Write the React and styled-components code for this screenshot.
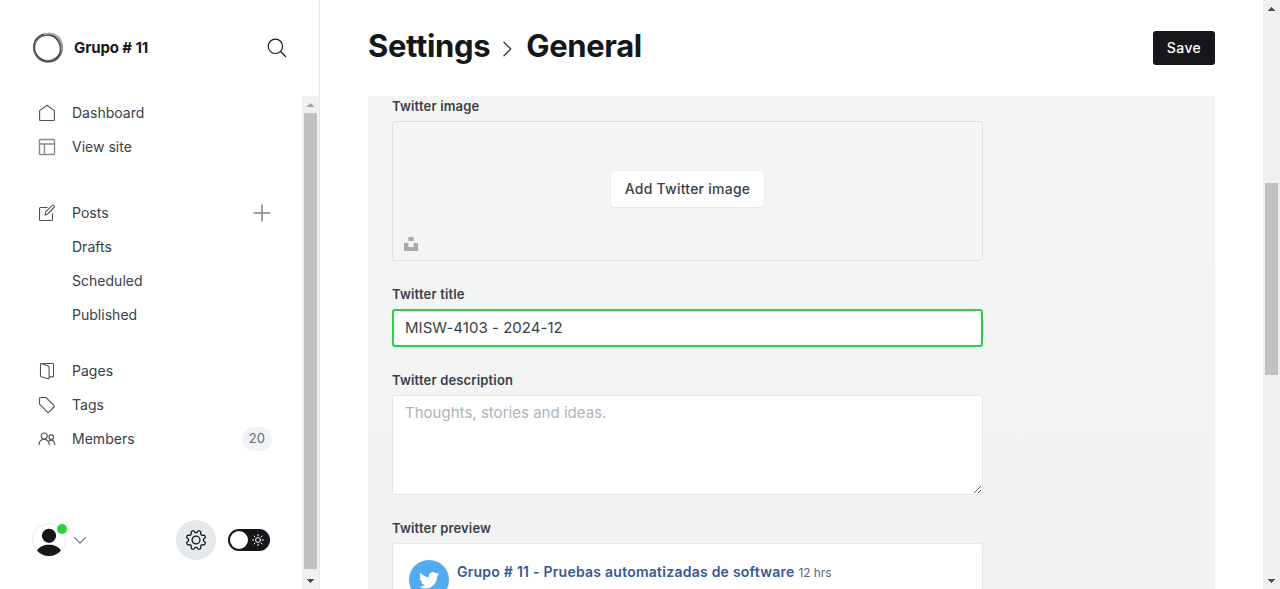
import React from "react";
import styled, { createGlobalStyle } from "styled-components";

const Global = createGlobalStyle`
  * { box-sizing: border-box; }
  html, body { margin: 0; height: 589px; overflow: hidden; background: #fff; }
  body, button, input, textarea { font-family: Inter, "Liberation Sans", sans-serif; }
  svg { display: block; flex: none; }
`;

const Page = styled.div`
  display: flex;
  width: 1280px;
  height: 589px;
  background: #fff;
  color: #394047;
`;

const Sidebar = styled.aside`
  display: flex;
  flex-direction: column;
  width: 320px;
  border-right: 1px solid #e6e9eb;
`;

const SiteHeader = styled.header`
  display: flex;
  align-items: center;
  height: 96px;
  padding: 0 32px;
`;

const SiteName = styled.div`
  flex: 1;
  margin-left: 10px;
  padding-bottom: 1px;
  font-size: 15px;
  font-weight: 700;
  letter-spacing: -0.1px;
  color: #15171a;
  white-space: nowrap;
`;

const SidebarBody = styled.div`
  display: flex;
  flex: 1;
  min-height: 0;
`;

const SidebarContent = styled.div`
  display: flex;
  flex-direction: column;
  flex: 1;
`;

const Nav = styled.nav`
  display: flex;
  flex-direction: column;
  flex: 1;
`;

const NavGroup = styled.div`
  margin-bottom: ${(p) => p.$gap}px;
`;

const NavRow = styled.a`
  display: flex;
  align-items: center;
  height: 34px;
  padding: 0 30px 0 ${(p) => (p.$nested ? 72 : 38)}px;
  font-size: 14px;
  white-space: nowrap;
`;

const NavIcon = styled.span`
  width: 34px;
`;

const NavLabel = styled.span`
  flex: 1;
  padding-bottom: 2px;
  letter-spacing: 0.02px;
`;

const Count = styled.span`
  width: 30px;
  height: 24px;
  border-radius: 12px;
  background: #f1f3f4;
  color: #626d79;
  font-size: 13px;
  line-height: 23px;
  letter-spacing: 0.3px;
  text-align: center;
`;

const PlusSlot = styled.span`
  margin-right: 1px;
`;

const Footer = styled.footer`
  display: flex;
  align-items: center;
  height: 40px;
  margin-bottom: 29px;
  padding: 0 32px;
`;

const FooterSpace = styled.div`
  flex: 1;
`;

const Avatar = styled.div`
  position: relative;
  width: 34px;
  height: 34px;
  margin-right: 8px;
`;

const OnlineDot = styled.span`
  position: absolute;
  top: 1px;
  right: -1px;
  width: 10px;
  height: 10px;
  border-radius: 50%;
  background: #30cf43;
`;

const SettingsButton = styled.span`
  display: flex;
  align-items: center;
  justify-content: center;
  width: 40px;
  height: 40px;
  margin-right: 12px;
  border-radius: 50%;
  background: #e5e9eb;
`;

const ThemeSwitch = styled.span`
  display: flex;
  align-items: center;
  justify-content: space-between;
  width: 42px;
  height: 22px;
  padding: 0 6px 0 2px;
  border-radius: 11px;
  background: #15171a;
`;

const Knob = styled.span`
  width: 18px;
  height: 18px;
  border-radius: 50%;
  background: #fff;
`;

const Track = styled.div`
  display: flex;
  flex-direction: column;
  align-items: center;
  width: 17px;
  height: 100%;
  background: #f0f0f0;
`;

const TrackEnd = styled.div`
  display: flex;
  align-items: center;
  justify-content: center;
  height: 17px;
`;

const Thumb = styled.div`
  width: 13px;
  height: ${(p) => p.$size}px;
  margin-top: ${(p) => p.$start}px;
  margin-bottom: auto;
  background: #c1c1c1;
`;

const Main = styled.main`
  display: flex;
  flex-direction: column;
  flex: 1;
  padding: 0 48px;
`;

const PageHeader = styled.header`
  display: flex;
  align-items: center;
  justify-content: space-between;
  height: 96px;
`;

const Title = styled.h1`
  display: flex;
  align-items: center;
  margin: 0;
  padding-bottom: 5px;
  font-size: 31px;
  font-weight: 700;
  line-height: 40px;
  color: #15171a;
`;

const Crumb = styled.span`
  letter-spacing: -0.35px;
`;

const CrumbArrow = styled.span`
  margin: 7px 14px 0 13px;
`;

const SaveButton = styled.button`
  width: 62px;
  height: 34px;
  padding: 0 0 2px;
  border: 0;
  border-radius: 3px;
  background: #15171a;
  color: #fff;
  font-size: 14px;
  font-weight: 500;
  letter-spacing: 0.45px;
`;

const Panel = styled.section`
  flex: 1;
  min-height: 0;
  overflow: hidden;
  padding: 1px 24px 0;
  background: linear-gradient(#f4f6f5, #f1f3f2);
`;

const Field = styled.div`
  width: 591px;
  margin-bottom: 24px;
`;

const Label = styled.label`
  display: block;
  height: 18px;
  margin-bottom: 6px;
  font-size: 13px;
  font-weight: 600;
  line-height: 18px;
  letter-spacing: 0.16px;
`;

const ImageDrop = styled.div`
  position: relative;
  display: flex;
  align-items: center;
  justify-content: center;
  height: 140px;
  padding-bottom: 4px;
  border: 1px solid #dce0e0;
  border-radius: 3px;
`;

const AddImage = styled.button`
  width: 153px;
  height: 36px;
  padding: 0 0 2px;
  border: 0;
  border-radius: 3px;
  background: #fff;
  box-shadow: 0 0 1px rgba(0, 0, 0, 0.15), 0 1px 2px rgba(0, 0, 0, 0.05);
  color: #394047;
  font-size: 14px;
  font-weight: 500;
  letter-spacing: 0.24px;
  white-space: nowrap;
`;

const UnsplashBadge = styled.span`
  position: absolute;
  left: 11px;
  bottom: 9px;
`;

const TextInput = styled.input`
  display: block;
  width: 100%;
  height: 38px;
  padding: 0 11px 2px;
  border: 2px solid #30cf43;
  border-radius: 3px;
  outline: none;
  background: #fff;
  color: #394047;
  font-size: 15px;
  letter-spacing: 0.04px;
`;

const TextArea = styled.textarea`
  display: block;
  width: 100%;
  height: 100px;
  padding: 6px 12px;
  border: 1px solid #e3e8e7;
  border-radius: 3px;
  outline: none;
  background: #fff;
  font-size: 15px;
  line-height: 21px;
  letter-spacing: 0.02px;
  resize: vertical;
  &::placeholder { color: #abb4be; }
`;

const PreviewCard = styled.div`
  display: flex;
  height: 220px;
  padding: 16px;
  border: 1px solid #e3e8e7;
  border-radius: 3px;
  background: #fff;
`;

const PreviewHead = styled.div`
  display: flex;
  align-items: baseline;
  height: 24px;
  margin-left: 8px;
  line-height: 24px;
  white-space: nowrap;
`;

const PreviewName = styled.span`
  font-size: 14px;
  font-weight: 600;
  letter-spacing: 0.245px;
  color: #365899;
`;

const PreviewTime = styled.span`
  margin-left: 4px;
  font-size: 12px;
  letter-spacing: -0.1px;
  color: #616770;
`;

const strokes = {
  fill: "none",
  stroke: "#4b535b",
  strokeWidth: 1.1,
  strokeLinecap: "round",
  strokeLinejoin: "round",
};

const icons = {
  home: <path d="M1.6 6.6 9 1.2l7.4 5.4v9.1a.8.8 0 0 1-.8.8H2.4a.8.8 0 0 1-.8-.8z" />,
  site: (
    <path
      stroke="#868b91"
      strokeWidth="1.4"
      d="M2.500 1.500h13a1 1 0 0 1 1 1v13a1 1 0 0 1-1 1h-13a1 1 0 0 1-1-1v-13a1 1 0 0 1 1-1zM1.500 6h15M6.500 6v10.500"
    />
  ),
  edit: <path d="M9 3.5H2.5a1 1 0 0 0-1 1v11a1 1 0 0 0 1 1h11a1 1 0 0 0 1-1V9.7M7 11l.7-3.1L14 1.6a1.3 1.3 0 0 1 1.9 0 1.3 1.3 0 0 1 0 1.9L9.7 9.9z" />,
  pages: <path d="M2.5 2.1v11.8a.9.9 0 0 0 .6.8l7 2a.8.8 0 0 0 1-.8V5a1.2 1.2 0 0 0-.8-1.1L3.300 1.600c-.5-.2-.8.1-.8.5zM3.2 1.5h11.6a.7.7 0 0 1 .7.7v12a.7.7 0 0 1-.7.7h-3.6" />,
  tag: <path d="M1.5 2.5v5a1.6 1.6 0 0 0 .5 1.2l7.5 7.4a1 1 0 0 0 1.4 0l5.1-5.1a1 1 0 0 0 0-1.4L8.5 2A1.7 1.7 0 0 0 7.3 1.5H2.5a1 1 0 0 0-1 1z" />,
  members: (
    <>
      <circle cx="6.2" cy="6" r="3" />
      <circle cx="13.3" cy="7.2" r="2.3" />
      <path d="M1.100 14.800c0-3.200 2-5.300 5-5.300s5.100 2.100 5.100 5.300M11.300 10.700c3-1.700 5.500.500 5.500 4.100" />
    </>
  ),
};

function LineIcon({ name }) {
  return (
    <svg width="18" height="18" viewBox="0 0 18 18" {...strokes}>
      {icons[name]}
    </svg>
  );
}

function Logo() {
  return (
    <svg width="32" height="32" viewBox="0 0 32 32" fill="none">
      <ellipse cx="16" cy="16" rx="13.900" ry="13.700" stroke="#777" strokeWidth="2.200" />
      <ellipse cx="16.600" cy="15.300" rx="14.300" ry="13.200" stroke="#888" strokeWidth="1.500" transform="rotate(-35 16 16)" />
      <ellipse cx="15.300" cy="16.500" rx="14.200" ry="12.600" stroke="#333" strokeWidth="1.100" transform="rotate(55 16 16)" />
      <path d="M12 2.800c7-3 15 .400 17.200 7.200v7" stroke="#aaa" strokeWidth="1.800" />
      <path d="M5 8C9 3 17 2 22.500 5.500S29 12 28.500 18" stroke="#555" strokeWidth="1" />
    </svg>
  );
}

function SearchIcon() {
  return (
    <svg width="20" height="20" viewBox="0 0 20 20" fill="none" stroke="#15171a" strokeWidth="1.2" strokeLinecap="round">
      <circle cx="8.4" cy="8.3" r="7.2" />
      <path d="m13.6 13.5 5 5" />
    </svg>
  );
}

function GearIcon() {
  const points = [];
  for (let i = 0; i < 96; i += 1) {
    const a = (i / 96) * Math.PI * 2;
    const wave = Math.max(-1, Math.min(1, Math.cos(a * 8 + Math.PI) * 1.5));
    const r = 8.6 + wave * 1.15;
    points.push(`${(11 + Math.cos(a) * r).toFixed(2)} ${(11 + Math.sin(a) * r).toFixed(2)}`);
  }
  return (
    <svg width="22" height="22" viewBox="0 0 22 22" fill="none" stroke="#15171a" strokeWidth="1.300" strokeLinejoin="round">
      <path d={`M${points.join("L")}Z`} />
      <circle cx="11" cy="11" r="3.900" />
    </svg>
  );
}

function SunIcon() {
  return (
    <svg width="12" height="12" viewBox="0 0 12 12" fill="none" stroke="#fff" strokeWidth="1" strokeLinecap="round">
      <circle cx="6" cy="6" r="2.400" />
      <path d="M6 .500v1.300M6 10.200v1.300M.500 6h1.300M10.200 6h1.300M2 2l1 1M9 9l1 1M2 10l1-1M9 3l1-1" />
    </svg>
  );
}

function UserIcon() {
  return (
    <svg width="34" height="34" viewBox="0 0 34 34">
      <circle cx="17" cy="17" r="16.4" fill="#fff" stroke="#e9ebed" />
      <circle cx="17" cy="12.8" r="7.1" fill="#15171a" />
      <path d="M5 27.5c2.3-3.7 7-5.7 12-5.7s9.7 2 12 5.7A16 16 0 0 1 17 33 16 16 0 0 1 5 27.5z" fill="#15171a" />
    </svg>
  );
}

function TwitterIcon() {
  return (
    <svg width="40" height="40" viewBox="0 0 40 40">
      <circle cx="20" cy="20" r="20" fill="#50abf1" />
      <path
        transform="translate(10 10.2) scale(.84)"
        fill="#fff"
        d="M23.95 4.57a10 10 0 0 1-2.82.78 4.96 4.96 0 0 0 2.16-2.73c-.95.56-2 .96-3.13 1.19a4.92 4.92 0 0 0-8.38 4.48C7.69 8.1 4.07 6.13 1.64 3.16a4.82 4.82 0 0 0-.67 2.48c0 1.71.87 3.21 2.19 4.1a4.9 4.9 0 0 1-2.23-.62v.06a4.92 4.92 0 0 0 3.95 4.83 5 5 0 0 1-2.21.08 4.94 4.94 0 0 0 4.6 3.42A9.87 9.87 0 0 1 0 19.54a14 14 0 0 0 7.55 2.21c9.05 0 14-7.5 14-13.98 0-.21 0-.42-.02-.63a9.94 9.94 0 0 0 2.46-2.55z"
      />
    </svg>
  );
}

function Scrollbar({ start, size, muted }) {
  return (
    <Track>
      <TrackEnd>
        <svg width="7" height="4" viewBox="0 0 7 4" shapeRendering="crispEdges">
          <path d="M3 0h1v1h1v1h1v1h1v1H0V3h1V2h1V1h1z" fill={muted ? "#a3a3a3" : "#505050"} />
        </svg>
      </TrackEnd>
      <Thumb $start={start} $size={size} />
      <TrackEnd>
        <svg width="7" height="4" viewBox="0 0 7 4" shapeRendering="crispEdges">
          <path d="M0 0h7v1H6v1H5v1H4v1H3V3H2V2H1V1H0z" fill="#505050" />
        </svg>
      </TrackEnd>
    </Track>
  );
}

function NavItem({ icon, label, nested, children }) {
  return (
    <NavRow $nested={nested}>
      {icon && (
        <NavIcon>
          <LineIcon name={icon} />
        </NavIcon>
      )}
      <NavLabel>{label}</NavLabel>
      {children}
    </NavRow>
  );
}

export default function App() {
  return (
    <Page>
      <Global />
      <Sidebar>
        <SiteHeader>
          <Logo />
          <SiteName>Grupo # 11</SiteName>
          <SearchIcon />
        </SiteHeader>
        <SidebarBody>
          <SidebarContent>
            <Nav>
              <NavGroup $gap={32}>
                <NavItem icon="home" label="Dashboard" />
                <NavItem icon="site" label="View site" />
              </NavGroup>
              <NavGroup $gap={22}>
                <NavItem icon="edit" label="Posts">
                  <PlusSlot>
                    <svg width="18" height="18" viewBox="0 0 18 18" stroke="#7f858c" strokeWidth="1.5">
                      <path d="M9 .5v17M.5 9h17" />
                    </svg>
                  </PlusSlot>
                </NavItem>
                <NavItem nested label="Drafts" />
                <NavItem nested label="Scheduled" />
                <NavItem nested label="Published" />
              </NavGroup>
              <NavGroup $gap={0}>
                <NavItem icon="pages" label="Pages" />
                <NavItem icon="tag" label="Tags" />
                <NavItem icon="members" label="Members">
                  <Count>20</Count>
                </NavItem>
              </NavGroup>
            </Nav>
            <Footer>
              <Avatar>
                <UserIcon />
                <OnlineDot />
              </Avatar>
              <svg width="12" height="7" viewBox="0 0 12 7" fill="none" stroke="#626d79" strokeWidth="1.2" strokeLinecap="round" strokeLinejoin="round">
                <path d="m.6.7 5.4 5.4L11.4.7" />
              </svg>
              <FooterSpace />
              <SettingsButton>
                <GearIcon />
              </SettingsButton>
              <ThemeSwitch>
                <Knob />
                <SunIcon />
              </ThemeSwitch>
            </Footer>
          </SidebarContent>
          <Scrollbar start={0} size={456} muted />
        </SidebarBody>
      </Sidebar>
      <Main>
        <PageHeader>
          <Title>
            <Crumb>Settings</Crumb>
            <CrumbArrow>
              <svg width="9" height="16" viewBox="0 0 9 16" fill="none" stroke="#394047" strokeWidth="1.4" strokeLinecap="round" strokeLinejoin="round">
                <path d="m1 1.300 6.800 6.700L1 14.700" />
              </svg>
            </CrumbArrow>
            <Crumb>General</Crumb>
          </Title>
          <SaveButton>Save</SaveButton>
        </PageHeader>
        <Panel>
          <Field>
            <Label>Twitter image</Label>
            <ImageDrop>
              <AddImage>Add Twitter image</AddImage>
              <UnsplashBadge>
                <svg width="14" height="14" viewBox="0 0 14 14" fill="#a6a8a8">
                  <path d="M4.4 0h5.2v4H4.4zM0 6h4.4v4h5.2V6H14v8H0z" />
                </svg>
              </UnsplashBadge>
            </ImageDrop>
          </Field>
          <Field>
            <Label>Twitter title</Label>
            <TextInput defaultValue="MISW-4103 - 2024-12" />
          </Field>
          <Field>
            <Label>Twitter description</Label>
            <TextArea placeholder="Thoughts, stories and ideas." />
          </Field>
          <Field>
            <Label>Twitter preview</Label>
            <PreviewCard>
              <TwitterIcon />
              <PreviewHead>
                <PreviewName>Grupo # 11 - Pruebas automatizadas de software</PreviewName>
                <PreviewTime>12 hrs</PreviewTime>
              </PreviewHead>
            </PreviewCard>
          </Field>
        </Panel>
      </Main>
      <Scrollbar start={166} size={192} />
    </Page>
  );
}
